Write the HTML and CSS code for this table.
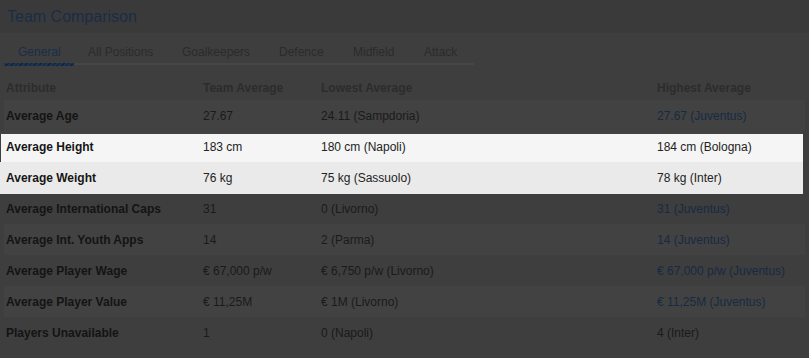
FILE: index.html
```html
<!DOCTYPE html>
<html>
<head>
<meta charset="utf-8">
<link rel="stylesheet" href="styles.css">
</head>
<body>
<div class="title">Team Comparison</div>
<div class="tabs">
  <div class="tab active t-gen">General</div>
  <div class="tab t-all">All Positions</div>
  <div class="tab t-gk">Goalkeepers</div>
  <div class="tab t-def">Defence</div>
  <div class="tab t-mid">Midfield</div>
  <div class="tab t-att">Attack</div>
</div>
<div class="table">
  <div class="row head"><div>Attribute</div><div>Team Average</div><div>Lowest Average</div><div>Highest Average</div></div>
  <div class="row alt"><div class="lbl">Average Age</div><div>27.67</div><div>24.11 (Sampdoria)</div><div class="blue">27.67 (Juventus)</div></div>
  <div class="row hl hl1"><div class="lbl">Average Height</div><div>183 cm</div><div>180 cm (Napoli)</div><div>184 cm (Bologna)</div></div>
  <div class="row hl hl2"><div class="lbl">Average Weight</div><div>76 kg</div><div>75 kg (Sassuolo)</div><div>78 kg (Inter)</div></div>
  <div class="row"><div class="lbl">Average International Caps</div><div>31</div><div>0 (Livorno)</div><div class="blue">31 (Juventus)</div></div>
  <div class="row alt"><div class="lbl">Average Int. Youth Apps</div><div>14</div><div>2 (Parma)</div><div class="blue">14 (Juventus)</div></div>
  <div class="row"><div class="lbl">Average Player Wage</div><div>€ 67,000 p/w</div><div>€ 6,750 p/w (Livorno)</div><div class="blue">€ 67,000 p/w (Juventus)</div></div>
  <div class="row alt"><div class="lbl">Average Player Value</div><div>€ 11,25M</div><div>€ 1M (Livorno)</div><div class="blue">€ 11,25M (Juventus)</div></div>
  <div class="row"><div class="lbl">Players Unavailable</div><div>1</div><div>0 (Napoli)</div><div>4 (Inter)</div></div>
</div>
</body>
</html>
```
FILE: styles.css
```css
html, body {
  margin: 0;
  padding: 0;
  background: #3e3e3e;
  font-family: "Liberation Sans", Arial, sans-serif;
  font-size: 12px;
  color: #1a1a1a;
  width: 809px;
  height: 358px;
  overflow: hidden;
}
.title {
  height: 33px;
  line-height: 33px;
  padding-left: 7px;
  background: #3a3a3a;
  color: #1a2d47;
  font-size: 16px;
}
.tabs {
  display: flex;
  align-items: flex-start;
  margin-left: 4px;
  width: 470px;
}
.tab {
  box-sizing: border-box;
  padding: 12px 0 4px 14px;
  line-height: 14px;
  color: #2b2b2b;
  border-bottom: 2px solid #464646;
  margin-bottom: 1px;
  white-space: nowrap;
}
.t-gen { width: 70px; }
.t-all { width: 94px; }
.t-gk { width: 97px; }
.t-def { width: 74px; }
.t-mid { width: 71px; }
.t-att { width: 64px; }
.tab.active {
  color: #1a2e48;
  border-bottom: 3px solid transparent;
  margin-bottom: 0;
  border-image: repeating-linear-gradient(135deg, #1c3554 0 2px, #13233a 2px 3px) 3;
}
.table {
  margin: 9px 0 0 4px;
  width: 801px;
}
.row {
  display: grid;
  grid-template-columns: 197px 118px 336px 1fr;
  height: 31px;
  align-items: center;
  box-sizing: border-box;
  color: #1a1a1a;
}
.row > div {
  padding-left: 2px;
  white-space: nowrap;
}
.row.head {
  height: 25px;
  align-items: end;
  padding-bottom: 5px;
  font-weight: bold;
  color: #2c2c2c;
}
.row.alt {
  background: #424242;
}
.lbl {
  font-weight: bold;
  color: #141414;
}
.blue {
  color: #172a43;
}
.row.hl {
  margin-left: -4px;
  padding-left: 4px;
  width: 803px;
  color: #222;
}
.row.hl .lbl {
  color: #161616;
}
.row.hl1 {
  background: #f5f5f5;
  border-top: 3px solid #424242;
  padding-bottom: 2px;
  box-shadow: inset 1px 0 0 #3e3e3e;
}
.row.hl2 {
  background: #eaeaea;
  box-shadow: 0 1px 0 #eaeaea;
}
```
